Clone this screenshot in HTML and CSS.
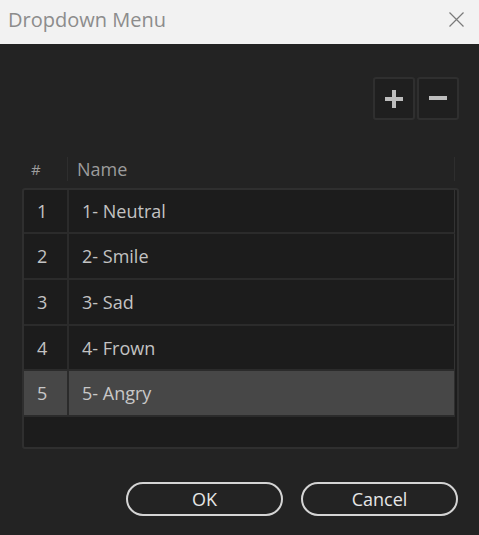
FILE: index.html
```html
<!DOCTYPE html>
<html>
<head>
<meta charset="utf-8">
<link rel="stylesheet" href="styles.css">
</head>
<body>
<div class="titlebar">
  <span class="title">Dropdown Menu</span>
  <svg class="close" width="15" height="15" viewBox="0 0 15 15"><path d="M0.5 0.5 L14.5 14.5 M14.5 0.5 L0.5 14.5" stroke="#7a7a7a" stroke-width="1.2" fill="none"/></svg>
</div>
<div class="content">
  <div class="toolbar">
    <div class="tbtn"><svg width="18" height="18" viewBox="0 0 18 18"><path d="M0 9 H18 M9 0 V18" stroke="#bdbdbd" stroke-width="4"/></svg></div>
    <div class="tbtn"><svg width="18" height="18" viewBox="0 0 18 18"><path d="M0 8 H18" stroke="#bdbdbd" stroke-width="4"/></svg></div>
  </div>
  <div class="thead">
    <div class="hnum">#</div>
    <div class="hname">Name</div>
  </div>
  <div class="table">
    <div class="row"><div class="num">1</div><div class="name">1- Neutral</div></div>
    <div class="row"><div class="num">2</div><div class="name">2- Smile</div></div>
    <div class="row"><div class="num">3</div><div class="name">3- Sad</div></div>
    <div class="row"><div class="num">4</div><div class="name">4- Frown</div></div>
    <div class="row selected"><div class="num">5</div><div class="name">5- Angry</div></div>
  </div>
  <div class="actions">
    <button class="btn">OK</button>
    <button class="btn">Cancel</button>
  </div>
</div>
</body>
</html>
```
FILE: styles.css
```css
* { box-sizing: border-box; }
html, body { margin: 0; padding: 0; }
body {
  width: 479px;
  height: 535px;
  background: #232323;
  font-family: "Open Sans", "Noto Sans", sans-serif;
  overflow: hidden;
}
.titlebar {
  height: 44px;
  background: #f2f2f2;
  display: flex;
  align-items: center;
  justify-content: space-between;
  padding: 0 15px 0 8px;
}
.title {
  color: #8c8c8c;
  font-size: 20px;
  margin-top: -5px;
}
.close { margin-top: -5px; }
.content {
  padding: 0 20px 0 22px;
  display: flex;
  flex-direction: column;
}
.toolbar {
  margin-top: 33px;
  display: flex;
  justify-content: flex-end;
  gap: 2px;
}
.tbtn {
  width: 42px;
  height: 43px;
  border: 2px solid #2f2f2f;
  border-radius: 3px;
  background: #1f1f1f;
  display: flex;
  align-items: center;
  justify-content: center;
}
.thead {
  margin-top: 37px;
  height: 24px;
  display: flex;
  align-items: center;
  color: #9c9c9c;
  font-size: 18px;
}
.hnum {
  width: 46px;
  height: 24px;
  padding-left: 9px;
  border-right: 1px solid #2e2e2e;
  line-height: 24px;
  font-size: 15px;
}
.hname {
  flex: 1;
  height: 24px;
  line-height: 24px;
  padding-left: 9px;
  border-right: 1px solid #2e2e2e;
  margin-right: 4px;
}
.table {
  margin-top: 7px;
  height: 261px;
  border: 2px solid #2f2f2f;
  border-radius: 3px;
  background: #1c1c1c;
  display: flex;
  flex-direction: column;
}
.row {
  height: 46px;
  flex: none;
  display: flex;
  align-items: center;
  border-bottom: 2px solid #2b2b2b;
  margin-right: 2px;
  border-right: 1px solid #333;
  color: #c3c3c3;
  font-size: 18px;
}
.row:nth-child(1) { height: 44px; }
.row:nth-child(4) { height: 45px; }
.row.selected {
  background: #474747;
  border-right-color: #2e2e2e;
  color: #c8c8c8;
}
.num {
  width: 45px;
  align-self: stretch;
  display: flex;
  align-items: center;
  border-right: 2px solid #2b2b2b;
  padding-left: 13px;
}
.name {
  flex: 1;
  padding-left: 13px;
}
.actions {
  margin-top: 33px;
  display: flex;
  justify-content: flex-end;
  gap: 18px;
  padding-right: 1px;
}
.btn {
  width: 157px;
  height: 34px;
  border: 2px solid #d4d4d4;
  border-radius: 17px;
  background: transparent;
  color: #e6e6e6;
  font-family: "Open Sans", "Noto Sans", sans-serif;
  font-size: 18px;
  padding: 0;
  line-height: 30px;
}
```
